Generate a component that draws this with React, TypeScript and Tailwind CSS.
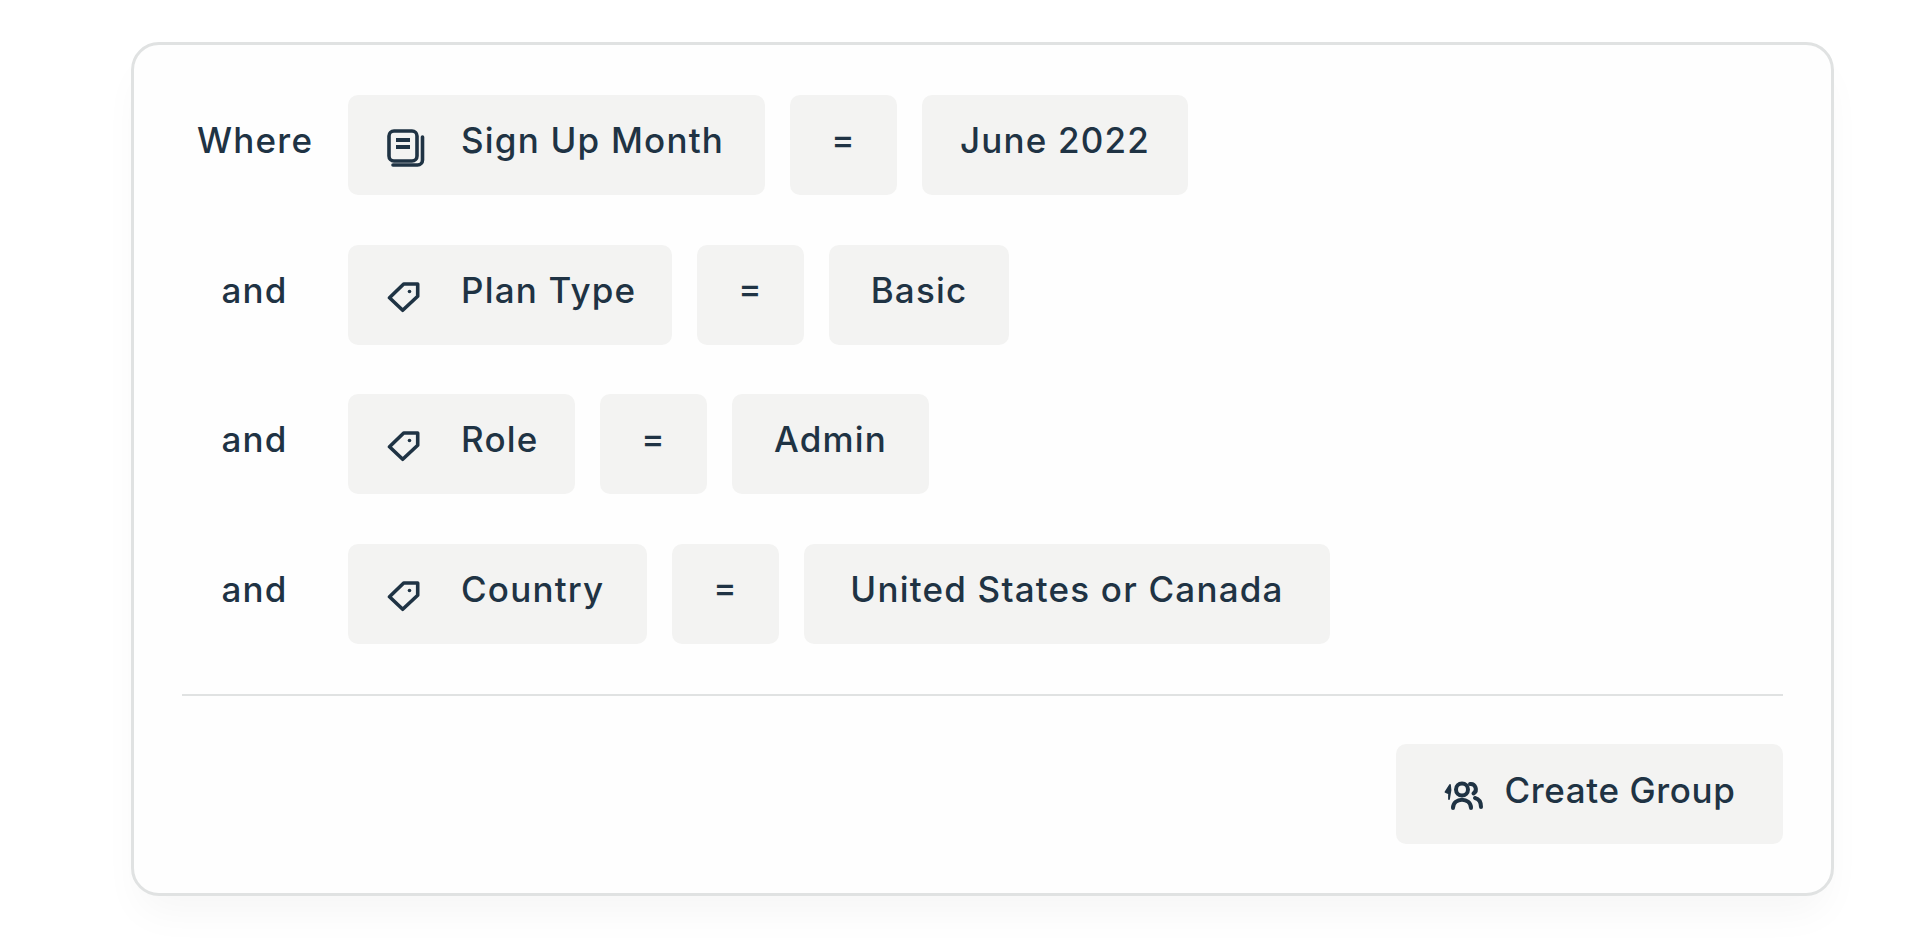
function NewsIcon() {
  return (
    <svg viewBox="0 0 38 38" className="h-[38px] w-[38px]" fill="none" stroke="currentColor" strokeWidth="3.6" strokeLinecap="round">
      <rect x="2" y="2" width="28" height="30" rx="5" />
      <path d="M9 11h14M9 18h14" strokeWidth="4" strokeLinecap="butt" />
      <path d="M35.5 8v23a5 5 0 0 1-5 5H6" />
    </svg>
  );
}

function TagIcon() {
  return (
    <svg viewBox="16 14 33 32" className="h-[32px] w-[33px]" fill="none" stroke="currentColor" strokeWidth="3.6" strokeLinejoin="round">
      <path d="M46.7 17h-14L18.5 30.7 31.7 43.3l15-14z" />
      <circle cx="38.5" cy="24.5" r="1.8" fill="currentColor" stroke="none" />
    </svg>
  );
}

function GroupIcon() {
  return (
    <svg viewBox="15 9 40 30" className="h-[30px] w-[40px]" fill="none" stroke="currentColor" strokeWidth="4" strokeLinecap="round">
      <circle cx="33" cy="18.5" r="6" />
      <path d="M24 37c0-11 18-11 18 0" />
      <path d="M41 13a5.2 5.2 0 0 1 3.5 9.5M46 27c4 1 6 4 6 9" />
      <path d="M21 14l-4.5 7 3.5 1.5V28l1.5-9z" fill="currentColor" strokeWidth="1.8" strokeLinejoin="round" />
    </svg>
  );
}

function Chip({ children, className = "" }: { children: React.ReactNode; className?: string }) {
  return (
    <div className={`flex h-[100px] items-center rounded-[10px] bg-[#f3f3f2] whitespace-nowrap ${className}`}>
      {children}
    </div>
  );
}

const rows = [
  { label: "Where", field: "Sign Up Month", value: "June 2022", icon: "news", w: 417, vw: 266 },
  { label: "and", field: "Plan Type", value: "Basic", icon: "tag", w: 324, vw: 180 },
  { label: "and", field: "Role", value: "Admin", icon: "tag", w: 227, vw: 197 },
  { label: "and", field: "Country", value: "United States or Canada", icon: "tag", w: 299, vw: 526 },
];

export default function App() {
  return (
    <div className="min-h-screen overflow-hidden bg-white pl-[131px] pt-[42px] font-['Inter',sans-serif] text-[35px] font-medium tracking-[1.2px] text-[#1f3344]">
      <div className="h-[854px] w-[1703px] rounded-[28px] border-[3px] border-[#e0e2e2] bg-[#fefefe] px-12 pt-[50px] shadow-[0_24px_40px_-8px_rgba(0,0,0,0.04)]">
        <div className="flex flex-col gap-[49.5px]">
          {rows.map((r) => (
            <div key={r.field} className="flex items-center pl-[15px]">
              <div className="mr-[36px] w-[115px] pb-[9px] text-center">{r.label}</div>
              <Chip className="mr-[25px] pl-[39px]">
                <span style={{ width: r.w - 39 }} className="flex items-center">
                  <span className={`flex w-[74px] items-center ${r.icon === "news" ? "mt-[5px]" : "mt-[4px]"}`}>
                    {r.icon === "news" ? <NewsIcon /> : <TagIcon />}
                  </span>
                  <span className="pb-[9px]">{r.field}</span>
                </span>
              </Chip>
              <Chip className="mr-[25px] w-[107px] justify-center">
                <span className="pb-3">=</span>
              </Chip>
              <Chip className="justify-center">
                <span style={{ width: r.vw }} className="pb-[9px] text-center">{r.value}</span>
              </Chip>
            </div>
          ))}
        </div>
        <div className="mt-[50px] h-[2px] bg-[#e0e2e2]" />
        <div className="mt-[48px] flex justify-end">
          <Chip className="w-[387px] justify-center gap-[21px]">
            <span className="mt-[3px]"><GroupIcon /></span>
            <span className="pb-[7px] tracking-[0.6px]">Create Group</span>
          </Chip>
        </div>
      </div>
    </div>
  );
}
